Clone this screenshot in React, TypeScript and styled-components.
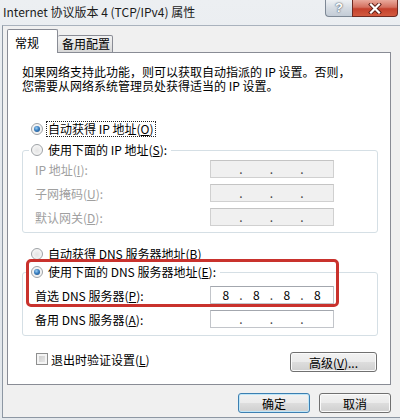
import React from "react";
import styled, { createGlobalStyle } from "styled-components";

const GlobalStyle = createGlobalStyle`
  html, body {
    margin: 0;
    padding: 0;
    background: #e4e8ed;
  }
  body {
    font-family: "Noto Sans CJK SC", "Liberation Sans", sans-serif;
    font-size: 12px;
    color: #000;
  }
  * { box-sizing: border-box; }
`;

type IpFieldProps = {
  value?: string[];
  disabled?: boolean;
};

const IpField = ({ value = ["", "", "", ""], disabled }: IpFieldProps) => (
  <IpBox $disabled={disabled}>
    {value.map((v, i) => (
      <React.Fragment key={i}>
        <IpSegment>{v}</IpSegment>
        {i < 3 && <IpDot>.</IpDot>}
      </React.Fragment>
    ))}
  </IpBox>
);

type RadioProps = {
  checked?: boolean;
  focus?: boolean;
  inLegend?: boolean;
  label: React.ReactNode;
};

const Radio = ({ checked, label, focus, inLegend }: RadioProps) => (
  <RadioRow $inset={inLegend ? 0 : 9}>
    <RadioCircle $checked={checked} />
    <RadioText $focus={focus}>{label}</RadioText>
  </RadioRow>
);

const App = () => {
  return (
    <>
      <GlobalStyle />
      <Window>
        <TitleBar>
          <Title>Internet 协议版本 4 (TCP/IPv4) 属性</Title>
          <CaptionButtons>
            <HelpButton>?</HelpButton>
            <CloseButton>
              <svg width="14" height="11" viewBox="0 0 14 11">
                <path d="M3 1.5 L11 9.5 M11 1.5 L3 9.5" stroke="#5b1d16" strokeWidth="4" strokeLinecap="square" />
                <path d="M3 1.5 L11 9.5 M11 1.5 L3 9.5" stroke="#fff" strokeWidth="2.2" strokeLinecap="square" />
              </svg>
            </CloseButton>
          </CaptionButtons>
        </TitleBar>

        <Client>
          <TabRow>
            <Tab $active>常规</Tab>
            <Tab>备用配置</Tab>
          </TabRow>

          <Panel>
            <Intro>
              如果网络支持此功能，则可以获取自动指派的 IP 设置。否则，
              <br />
              您需要从网络系统管理员处获得适当的 IP 设置。
            </Intro>

            <TopRadio>
              <Radio checked focus label={<>自动获得 IP 地址(<u>O</u>)</>} />
            </TopRadio>

            <GroupBox>
              <Legend>
                <Radio inLegend label={<>使用下面的 IP 地址(<u>S</u>):</>} />
              </Legend>
              <FieldRows>
                <FieldRow>
                  <FieldLabel $disabled>IP 地址(<u>I</u>):</FieldLabel>
                  <IpField disabled />
                </FieldRow>
                <FieldRow>
                  <FieldLabel $disabled>子网掩码(<u>U</u>):</FieldLabel>
                  <IpField disabled />
                </FieldRow>
                <FieldRow>
                  <FieldLabel $disabled>默认网关(<u>D</u>):</FieldLabel>
                  <IpField disabled />
                </FieldRow>
              </FieldRows>
            </GroupBox>

            <DnsRadio>
              <Radio label={<>自动获得 DNS 服务器地址(<u>B</u>)</>} />
            </DnsRadio>

            <DnsBlock>
              <GroupBox $tight>
                <Legend>
                  <Radio inLegend checked label={<>使用下面的 DNS 服务器地址(<u>E</u>):</>} />
                </Legend>
                <FieldRows $dns>
                  <FieldRow>
                    <FieldLabel>首选 DNS 服务器(<u>P</u>):</FieldLabel>
                    <IpField value={["8", "8", "8", "8"]} />
                  </FieldRow>
                  <FieldRow>
                    <FieldLabel>备用 DNS 服务器(<u>A</u>):</FieldLabel>
                    <IpField />
                  </FieldRow>
                </FieldRows>
              </GroupBox>
              <Highlight />
            </DnsBlock>

            <BottomRow>
              <CheckLabel>
                <CheckBox />
                <span>退出时验证设置(<u>L</u>)</span>
              </CheckLabel>
              <Button $width={87}>高级(<u>V</u>)...</Button>
            </BottomRow>
          </Panel>

          <Footer>
            <Button $width={72} $default>确定</Button>
            <Button $width={72}>取消</Button>
          </Footer>
        </Client>
      </Window>
    </>
  );
};

export default App;

const Window = styled.div`
  width: 400px;
  height: 420px;
  display: flex;
  flex-direction: column;
  background: linear-gradient(180deg, #eceff2 0%, #e2e6eb 60%, #e4e8ec 100%);
  overflow: hidden;
`;

const TitleBar = styled.div`
  height: 25px;
  flex-shrink: 0;
  display: flex;
  justify-content: space-between;
  align-items: flex-start;
`;

const Title = styled.div`
  padding-left: 3px;
  line-height: 24px;
  font-size: 12px;
  color: #1b1b1b;
  white-space: nowrap;
`;

const CaptionButtons = styled.div`
  display: flex;
  margin-right: 2px;
`;

const HelpButton = styled.div`
  width: 27px;
  height: 17px;
  border: 1px solid #7d8895;
  border-top: none;
  border-right: none;
  border-radius: 0 0 0 4px;
  background: linear-gradient(180deg, #eef1f4 0%, #d5dbe2 50%, #c3ccd6 100%);
  color: #fff;
  font-family: "Liberation Sans", sans-serif;
  font-weight: 700;
  font-size: 13px;
  line-height: 16px;
  text-align: center;
  text-shadow: 0 0 2px #4d5a68, 0 0 1px #4d5a68;
`;

const CloseButton = styled.div`
  width: 46px;
  height: 17px;
  border: 1px solid #6e2a22;
  border-top: none;
  border-radius: 0 0 4px 0;
  background: linear-gradient(180deg, #e9a99c 0%, #d4705f 45%, #c4402c 55%, #d25a3f 100%);
  display: flex;
  align-items: center;
  justify-content: center;
`;

const Client = styled.div`
  flex: 1;
  margin: 0 0 2px 2px;
  border-left: 1px solid #8d97a3;
  border-top: 1px solid #a9b2bd;
  border-bottom: 1px solid #8d97a3;
  background: #f0f0f0;
  padding: 3px 9px 0 4px;
  display: flex;
  flex-direction: column;
`;

const TabRow = styled.div`
  display: flex;
  align-items: flex-end;
  height: 24px;
  margin-bottom: -1px;
  position: relative;
  z-index: 1;
`;

const Tab = styled.div<{ $active?: boolean }>`
  border: 1px solid #898c95;
  border-radius: 2px 2px 0 0;
  white-space: nowrap;
  ${(p) =>
    p.$active
      ? `
    width: 51px;
    height: 24px;
    border-bottom: none;
    background: #fff;
    padding: 5px 0 0 7px;
    line-height: 16px;
  `
      : `
    width: 55px;
    height: 18px;
    border-left: none;
    background: linear-gradient(180deg, #f2f2f2 0%, #e6e6e6 50%, #d8d8d8 100%);
    padding: 0 0 0 4px;
    line-height: 16px;
  `}
`;

const Panel = styled.div`
  background: #fff;
  border: 1px solid #898c95;
  padding: 12px 12px 12px 14px;
  display: flex;
  flex-direction: column;
`;

const Intro = styled.p`
  margin: 0;
  line-height: 14px;
  white-space: nowrap;
`;

const TopRadio = styled.div`
  margin-top: 28px;
`;

const DnsRadio = styled.div`
  margin-top: 13px;
`;

const RadioRow = styled.div<{ $inset: number }>`
  display: flex;
  align-items: center;
  gap: 3px;
  height: 16px;
  padding-left: ${(p) => p.$inset}px;
  white-space: nowrap;
`;

const RadioCircle = styled.span<{ $checked?: boolean }>`
  width: 12px;
  height: 12px;
  border-radius: 50%;
  border: 1px solid #9ea2a6;
  background: radial-gradient(circle at 50% 55%, #e4e4e4 0%, #f6f6f6 70%, #fff 100%);
  display: flex;
  align-items: center;
  justify-content: center;
  flex-shrink: 0;
  &::after {
    content: "";
    display: ${(p) => (p.$checked ? "block" : "none")};
    width: 6px;
    height: 6px;
    border-radius: 50%;
    background: radial-gradient(circle at 40% 35%, #9ed0f5 0%, #3a7fc0 45%, #17477d 100%);
  }
`;

const RadioText = styled.span<{ $focus?: boolean }>`
  line-height: 14px;
  padding: 0 1px;
  border: 1px dotted ${(p) => (p.$focus ? "#222" : "transparent")};
`;

const GroupBox = styled.fieldset<{ $tight?: boolean }>`
  margin: ${(p) => (p.$tight ? "0" : "5px 0 0 0")};
  padding: 0 0 ${(p) => (p.$tight ? "7px" : "6px")} 12px;
  border: 1px solid #d5dfe5;
  border-radius: 3px;
  min-width: 0;
`;

const Legend = styled.legend`
  margin-left: -6px;
  padding: 0 2px;
`;

const FieldRows = styled.div<{ $dns?: boolean }>`
  display: flex;
  flex-direction: column;
  gap: 6px;
  padding-top: ${(p) => (p.$dns ? "6px" : "2px")};
`;

const FieldRow = styled.div`
  display: grid;
  grid-template-columns: 175px 124px;
  align-items: center;
  height: 18px;
`;

const FieldLabel = styled.span<{ $disabled?: boolean }>`
  color: ${(p) => (p.$disabled ? "#a0a0a0" : "#000")};
  white-space: nowrap;
`;

const IpBox = styled.div<{ $disabled?: boolean }>`
  height: 18px;
  display: flex;
  align-items: center;
  padding: 0 3px 0 2px;
  border: 1px solid ${(p) => (p.$disabled ? "#d0d0d0" : "#c2c5ca")};
  border-top-color: ${(p) => (p.$disabled ? "#c4c4c4" : "#a3a7ae")};
  background: ${(p) => (p.$disabled ? "#f0f0f0" : "#fff")};
  color: #000;
`;

const IpSegment = styled.span`
  flex: 1;
  text-align: center;
  line-height: 16px;
`;

const IpDot = styled.span`
  width: 5px;
  text-align: center;
  line-height: 16px;
  color: #444;
`;

const DnsBlock = styled.div`
  position: relative;
  margin-top: 2px;
`;

const Highlight = styled.div`
  position: absolute;
  left: 4px;
  top: -5px;
  width: 313px;
  height: 48px;
  border: 3px solid #c9322d;
  border-radius: 5px;
  pointer-events: none;
`;

const BottomRow = styled.div`
  display: flex;
  justify-content: space-between;
  align-items: flex-start;
  margin: 16px 1px 0 14px;
`;

const CheckLabel = styled.label`
  display: flex;
  align-items: center;
  gap: 3px;
  height: 14px;
  white-space: nowrap;
`;

const CheckBox = styled.span`
  width: 12px;
  height: 12px;
  border: 1px solid #8e8f8f;
  background: #f4f4f4;
  flex-shrink: 0;
  display: flex;
  padding: 2px;
  &::after {
    content: "";
    flex: 1;
    background: linear-gradient(135deg, #cfcfcf 0%, #e6e6e6 100%);
  }
`;

const Button = styled.button<{ $width: number; $default?: boolean }>`
  width: ${(p) => p.$width}px;
  height: 20px;
  padding: 0;
  font-family: inherit;
  font-size: 12px;
  color: #000;
  border: 1px solid ${(p) => (p.$default ? "#3c7fb1" : "#707070")};
  border-radius: 3px;
  background: linear-gradient(180deg, #f2f2f2 0%, #ebebeb 48%, #dddddd 52%, #cfcfcf 100%);
  box-shadow: inset 0 0 0 1px ${(p) => (p.$default ? "#bfe6f8" : "#fbfbfb")};
  white-space: nowrap;
`;

const Footer = styled.div`
  display: flex;
  justify-content: flex-end;
  gap: 9px;
  margin-top: 8px;
`;
